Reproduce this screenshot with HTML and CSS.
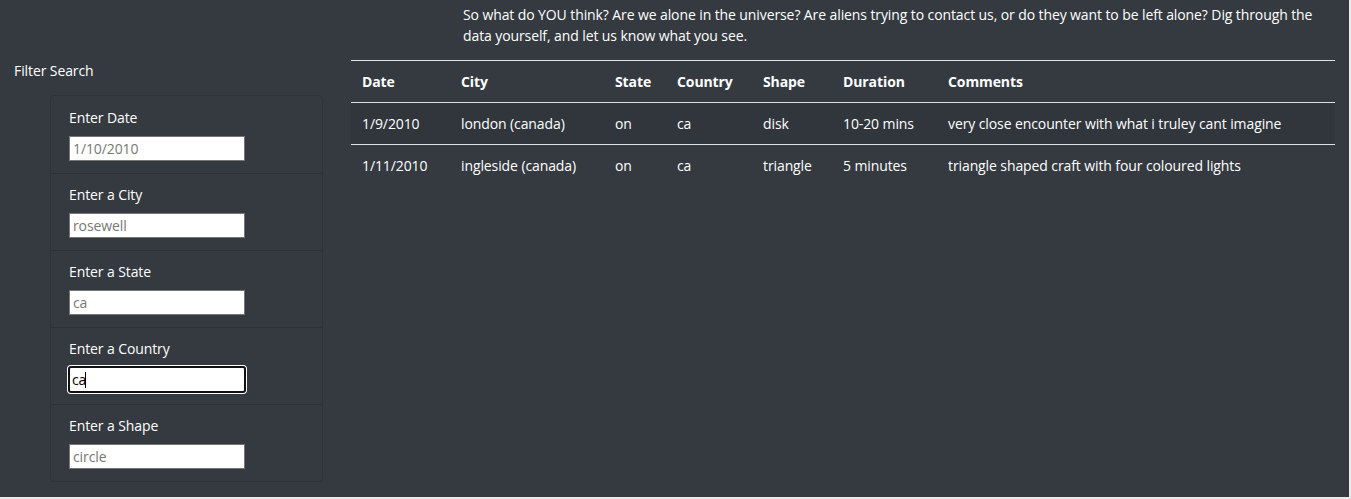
FILE: index.html
```html
<!DOCTYPE html>
<html lang="en">
<head>
<meta charset="utf-8">
<title>UFO Sightings</title>
<link rel="stylesheet" href="styles.css">
</head>
<body>
<div class="page">
  <aside class="sidebar">
    <div class="filter-title">Filter Search</div>
    <ul class="filters">
      <li class="filter-item">
        <label class="filter-label" for="datetime">Enter Date</label>
        <input class="filter-input" id="datetime" type="text" placeholder="1/10/2010">
      </li>
      <li class="filter-item">
        <label class="filter-label" for="city">Enter a City</label>
        <input class="filter-input" id="city" type="text" placeholder="rosewell">
      </li>
      <li class="filter-item">
        <label class="filter-label" for="state">Enter a State</label>
        <input class="filter-input" id="state" type="text" placeholder="ca">
      </li>
      <li class="filter-item">
        <label class="filter-label" for="country">Enter a Country</label>
        <span class="input-wrap">
          <input class="filter-input is-focused" id="country" type="text" value="ca">
          <span class="caret"></span>
        </span>
      </li>
      <li class="filter-item">
        <label class="filter-label" for="shape">Enter a Shape</label>
        <input class="filter-input" id="shape" type="text" placeholder="circle">
      </li>
    </ul>
  </aside>
  <main class="content">
    <p class="intro">So what do YOU think? Are we alone in the universe? Are aliens trying to contact us, or do they want to be left alone? Dig through the data yourself, and let us know what you see.</p>
    <table class="ufo-table">
      <colgroup>
        <col class="c-date"><col class="c-city"><col class="c-state"><col class="c-country"><col class="c-shape"><col class="c-duration"><col class="c-comments">
      </colgroup>
      <thead>
        <tr>
          <th>Date</th><th>City</th><th>State</th><th>Country</th><th>Shape</th><th>Duration</th><th>Comments</th>
        </tr>
      </thead>
      <tbody>
        <tr class="striped">
          <td>1/9/2010</td><td>london (canada)</td><td>on</td><td>ca</td><td>disk</td><td>10-20 mins</td><td>very close encounter with what i truley cant imagine</td>
        </tr>
        <tr>
          <td>1/11/2010</td><td>ingleside (canada)</td><td>on</td><td>ca</td><td>triangle</td><td>5 minutes</td><td>triangle shaped craft with four coloured lights</td>
        </tr>
      </tbody>
    </table>
  </main>
</div>
</body>
</html>
```
FILE: styles.css
```css
html, body {
  margin: 0;
  padding: 0;
  background: #eaeaea;
}
body {
  font-family: "Open Sans", "Noto Sans", "Liberation Sans", sans-serif;
  font-size: 14px;
  letter-spacing: -0.1px;
  color: #fff;
}
.page {
  width: 1349px;
  height: 497px;
  background: #343a40;
  display: flex;
}
.sidebar {
  width: 351px;
  flex: none;
}
.filter-title {
  padding: 61px 0 0 14px;
  line-height: 20px;
  height: 20px;
}
.filters {
  list-style: none;
  margin: 14px 0 0 50px;
  padding: 0;
  width: 271px;
  border: 1px solid #2e3338;
  border-radius: 4px;
}
.filter-item {
  height: 77px;
  padding: 0 0 0 18px;
  box-sizing: border-box;
  border-top: 1px solid #2c3136;
  display: flex;
  flex-direction: column;
}
.filter-item:first-child {
  border-top: none;
  height: 77px;
}
.filter-label {
  margin-top: 12px;
  line-height: 20px;
  height: 20px;
}
.filter-item:not(:first-child) .filter-label {
  margin-top: 11px;
}
.filter-input {
  margin-top: 8px;
  width: 176px;
  height: 25px;
  box-sizing: border-box;
  border: 1px solid #767676;
  background: #fff;
  font-family: inherit;
  font-size: 14px;
  letter-spacing: -0.1px;
  padding: 0 3px;
  color: #000;
  outline: none;
}
.filter-input::placeholder {
  color: #777;
}
.input-wrap {
  position: relative;
  display: block;
  width: 178px;
  margin-top: 7px;
  margin-left: -1px;
}
.input-wrap .filter-input {
  margin-top: 0;
  width: 178px;
  height: 27px;
  border: 2px solid #111;
  border-radius: 3px;
  box-shadow: 0 0 0 1px #fff;
  padding: 0 2px;
}
.caret {
  position: absolute;
  left: 17px;
  top: 6px;
  width: 1px;
  height: 16px;
  background: #000;
}
.content {
  width: 984px;
  flex: none;
}
.intro {
  margin: 4px 0 0 112px;
  line-height: 21px;
  width: 872px;
  height: 42px;
}
.ufo-table {
  margin-top: 14px;
  width: 984px;
  border-collapse: collapse;
  table-layout: fixed;
}
.c-date { width: 99px; }
.c-city { width: 154px; }
.c-state { width: 62px; }
.c-country { width: 86px; }
.c-shape { width: 80px; }
.c-duration { width: 105px; }
.c-comments { width: 398px; }
.ufo-table th,
.ufo-table td {
  text-align: left;
  padding: 0 0 0 11px;
  height: 41px;
  line-height: 20px;
  white-space: nowrap;
  vertical-align: middle;
}
.ufo-table th {
  font-weight: 700;
  border-top: 1px solid #dee2e6;
  border-bottom: 1px solid #dee2e6;
}
.ufo-table tbody td {
  border-bottom: 1px solid #dee2e6;
}
.ufo-table tbody tr:last-child td {
  border-bottom: none;
}
.striped {
  background: #31363c;
}
```
